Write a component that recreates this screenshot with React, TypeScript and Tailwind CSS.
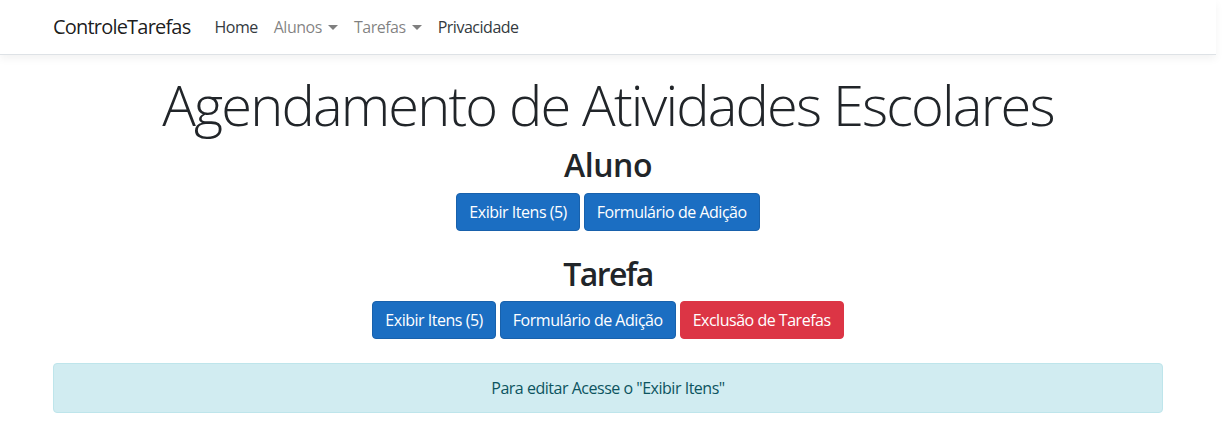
import React from "react";

function Caret() {
  return <span className="ml-[6px] inline-block align-[3px] border-t-[5px] border-x-[5px] border-b-0 border-x-transparent border-t-current" />;
}

export default function App() {
  const btn = "px-3 rounded-[4px] bg-[#1b6ec2] border border-[#1861ac] text-white";
  return (
    <div className="w-[1216px] bg-white text-[#212529] text-[16px] leading-[1.5] tracking-[-0.03em] font-['Open_Sans',sans-serif]">
      <nav className="h-[55px] border-b border-[#dee2e6] shadow-[0_4px_8px_rgba(0,0,0,0.05)] mb-4">
        <div className="w-[1110px] mx-auto h-full flex items-center">
          <span className="text-[20px] tracking-[-0.04em] text-[rgba(0,0,0,0.9)] mr-[16px]">ControleTarefas</span>
          <div className="flex items-center text-[16px]">
            <span className="px-[8px] text-[#343a40]">Home</span>
            <span className="px-[8px] text-[rgba(0,0,0,0.5)]">Alunos<Caret /></span>
            <span className="px-[8px] text-[rgba(0,0,0,0.5)]">Tarefas<Caret /></span>
            <span className="px-[8px] text-[#343a40]">Privacidade</span>
          </div>
        </div>
      </nav>
      <main className="w-[1110px] mx-auto text-center">
        <h1 className="text-[56px] font-light leading-[1.2] tracking-[-0.033em] mb-2">Agendamento de Atividades Escolares</h1>
        <h2 className="text-[32px] font-semibold leading-[1.2] mb-2">Aluno</h2>
        <div className="flex justify-center gap-[4px] h-[38px]">
          <button className={btn}>Exibir Itens (5)</button>
          <button className={btn}>Formulário de Adição</button>
        </div>
        <div className="h-[24px]" />
        <h2 className="text-[32px] font-semibold leading-[1.2] tracking-[-0.05em] mb-2">Tarefa</h2>
        <div className="flex justify-center gap-[4px] h-[38px]">
          <button className={btn}>Exibir Itens (5)</button>
          <button className={btn}>Formulário de Adição</button>
          <button className="px-3 rounded-[4px] bg-[#dc3545] border border-[#dc3545] text-white">Exclusão de Tarefas</button>
        </div>
        <div className="h-[24px]" />
        <div className="border border-[#bee5eb] bg-[#d1ecf1] text-[#0c5460] rounded-[4px] py-3 px-5">
          Para editar Acesse o "Exibir Itens"
        </div>
      </main>
    </div>
  );
}
